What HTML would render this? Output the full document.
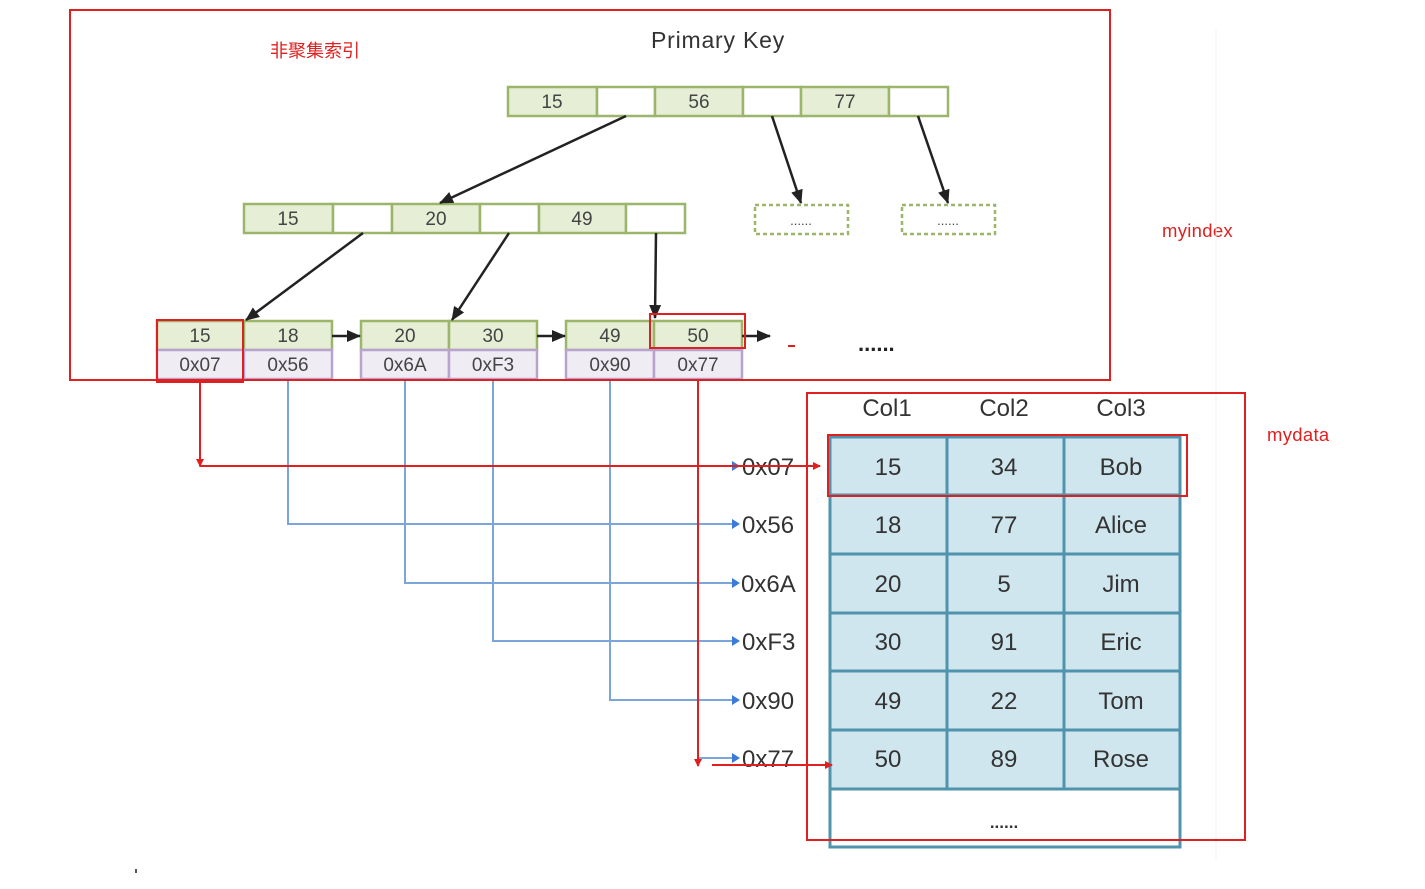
<!DOCTYPE html>
<html><head><meta charset="utf-8"><style>
body{margin:0;background:#fff;width:1425px;height:889px;overflow:hidden}
svg{display:block}
text{font-family:"Liberation Sans","DejaVu Sans",sans-serif}
</style></head><body>
<svg width="1425" height="889" viewBox="0 0 1425 889">
<defs>
<marker id="ab2" markerWidth="14" markerHeight="12" refX="13" refY="6" orient="auto" markerUnits="userSpaceOnUse"><path d="M0,0 L14,6 L0,12z" fill="#222"/></marker>
<marker id="ar" markerWidth="8" markerHeight="8" refX="7" refY="4" orient="auto" markerUnits="userSpaceOnUse"><path d="M0,0 L8,4 L0,8z" fill="#e02020"/></marker>
</defs>
<text x="651" y="48" font-size="23" fill="#333" letter-spacing="0.8">Primary Key</text>
<text x="270" y="57" font-size="18" fill="#e02020" font-family="Noto Sans CJK SC,sans-serif">非聚集索引</text>
<text x="1162" y="237" font-size="18.5" fill="#e02020" letter-spacing="0.3">myindex</text>
<text x="1267" y="441" font-size="18.5" fill="#e02020" letter-spacing="0.3">mydata</text>

<g stroke="#9bb56a" stroke-width="2.5" fill="#e6eed6">
<rect x="508" y="87" width="89" height="29"/><rect x="597" y="87" width="58" height="29" fill="#fff"/>
<rect x="655" y="87" width="88" height="29"/><rect x="743" y="87" width="58" height="29" fill="#fff"/>
<rect x="801" y="87" width="88" height="29"/><rect x="889" y="87" width="59" height="29" fill="#fff"/>
<rect x="244" y="204" width="89" height="29"/><rect x="333" y="204" width="59" height="29" fill="#fff"/>
<rect x="392" y="204" width="88" height="29"/><rect x="480" y="204" width="59" height="29" fill="#fff"/>
<rect x="539" y="204" width="87" height="29"/><rect x="626" y="204" width="59" height="29" fill="#fff"/>
<rect x="755" y="205" width="93" height="29" fill="#fff" stroke-dasharray="4 3"/>
<rect x="902" y="205" width="93" height="29" fill="#fff" stroke-dasharray="4 3"/>
<rect x="157" y="321" width="87" height="29"/><rect x="244" y="321" width="88" height="29"/>
<rect x="361" y="321" width="88" height="29"/><rect x="449" y="321" width="88" height="29"/>
<rect x="566" y="321" width="88" height="29"/><rect x="654" y="321" width="88" height="29"/>
</g>
<g stroke="#b8a3cc" stroke-width="2.5" fill="#efecf4">
<rect x="157" y="350" width="87" height="29"/><rect x="244" y="350" width="88" height="29"/>
<rect x="361" y="350" width="88" height="29"/><rect x="449" y="350" width="88" height="29"/>
<rect x="566" y="350" width="88" height="29"/><rect x="654" y="350" width="88" height="29"/>
</g>
<g font-size="19" fill="#444" text-anchor="middle">
<text x="552" y="108">15</text><text x="699" y="108">56</text><text x="845" y="108">77</text>
<text x="288" y="225">15</text><text x="436" y="225">20</text><text x="582" y="225">49</text>
<text x="801" y="225" font-size="13">......</text><text x="948" y="225" font-size="13">......</text>
<text x="200" y="342">15</text><text x="288" y="342">18</text><text x="405" y="342">20</text><text x="493" y="342">30</text><text x="610" y="342">49</text><text x="698" y="342">50</text>
<text x="200" y="371">0x07</text><text x="288" y="371">0x56</text><text x="405" y="371">0x6A</text><text x="493" y="371">0xF3</text><text x="610" y="371">0x90</text><text x="698" y="371">0x77</text>
</g>
<g stroke="#222" stroke-width="2.5" fill="none">
<line x1="626" y1="116" x2="440" y2="203" marker-end="url(#ab2)"/>
<line x1="772" y1="116" x2="801" y2="203" marker-end="url(#ab2)"/>
<line x1="918" y1="116" x2="948" y2="203" marker-end="url(#ab2)"/>
<line x1="363" y1="233" x2="246" y2="320" marker-end="url(#ab2)"/>
<line x1="509" y1="233" x2="452" y2="320" marker-end="url(#ab2)"/>
<line x1="656" y1="233" x2="655" y2="318" marker-end="url(#ab2)"/>
<line x1="332" y1="336" x2="360" y2="336" marker-end="url(#ab2)"/>
<line x1="537" y1="336" x2="565" y2="336" marker-end="url(#ab2)"/>
<line x1="742" y1="336" x2="770" y2="336" marker-end="url(#ab2)"/>
</g>
<text x="858" y="351" font-size="22" font-weight="bold" fill="#222">......</text>
<line x1="788" y1="346" x2="795" y2="346" stroke="#e02020" stroke-width="2"/>

<g stroke="#7ba6dc" stroke-width="2" fill="none">
<path d="M200 380V466H738"/><path d="M288 380V524H738"/><path d="M405 380V583H738"/>
<path d="M493 380V641H738"/><path d="M610 380V700H738"/><path d="M698 380V758H738"/>
</g>
<g fill="#3a7ad8"><path d="M732 461l8 5-8 5z"/><path d="M732 519l8 5-8 5z"/><path d="M732 578l8 5-8 5z"/><path d="M732 636l8 5-8 5z"/><path d="M732 695l8 5-8 5z"/><path d="M732 753l8 5-8 5z"/></g>
<g font-size="24" fill="#333">
<text x="742" y="475">0x07</text><text x="742" y="533">0x56</text><text x="741" y="592">0x6A</text>
<text x="742" y="650">0xF3</text><text x="742" y="709">0x90</text><text x="742" y="767">0x77</text>
</g>

<g font-size="24" fill="#333" text-anchor="middle">
<text x="887" y="416">Col1</text><text x="1004" y="416">Col2</text><text x="1121" y="416">Col3</text>
</g>
<rect x="830" y="437" width="350" height="410" fill="#fff"/>
<rect x="830" y="437" width="350" height="352" fill="#cfe6ee"/>
<g stroke="#4f93ad" stroke-width="3" fill="none">
<rect x="830" y="437" width="350" height="410"/>
<line x1="830" y1="495" x2="1180" y2="495"/><line x1="830" y1="554" x2="1180" y2="554"/>
<line x1="830" y1="613" x2="1180" y2="613"/><line x1="830" y1="671" x2="1180" y2="671"/>
<line x1="830" y1="730" x2="1180" y2="730"/><line x1="830" y1="789" x2="1180" y2="789"/>
<line x1="947" y1="437" x2="947" y2="789"/><line x1="1064" y1="437" x2="1064" y2="789"/>
</g>
<g font-size="24" fill="#333" text-anchor="middle">
<text x="888" y="475">15</text><text x="1004" y="475">34</text><text x="1121" y="475">Bob</text>
<text x="888" y="533">18</text><text x="1004" y="533">77</text><text x="1121" y="533">Alice</text>
<text x="888" y="592">20</text><text x="1004" y="592">5</text><text x="1121" y="592">Jim</text>
<text x="888" y="650">30</text><text x="1004" y="650">91</text><text x="1121" y="650">Eric</text>
<text x="888" y="709">49</text><text x="1004" y="709">22</text><text x="1121" y="709">Tom</text>
<text x="888" y="767">50</text><text x="1004" y="767">89</text><text x="1121" y="767">Rose</text>
<text x="1004" y="828" font-size="17" font-weight="bold">......</text>
</g>
<line x1="1216" y1="30" x2="1216" y2="860" stroke="#f0f0f0" stroke-width="1"/>

<g stroke="#e02020" stroke-width="2" fill="none">
<rect x="70" y="10" width="1040" height="370"/>
<rect x="157" y="320" width="86" height="62"/>
<rect x="650" y="314" width="95" height="34"/>
<rect x="807" y="393" width="438" height="447"/>
<rect x="828" y="435" width="359" height="61"/>
<path d="M200 380V466" marker-end="url(#ar)"/>
<path d="M200 466H820" marker-end="url(#ar)"/>
<path d="M698 380V766" marker-end="url(#ar)"/>
<path d="M712 765H832" marker-end="url(#ar)"/>
</g>
<rect x="135" y="869" width="2" height="4" fill="#555"/>
</svg>
</body></html>
